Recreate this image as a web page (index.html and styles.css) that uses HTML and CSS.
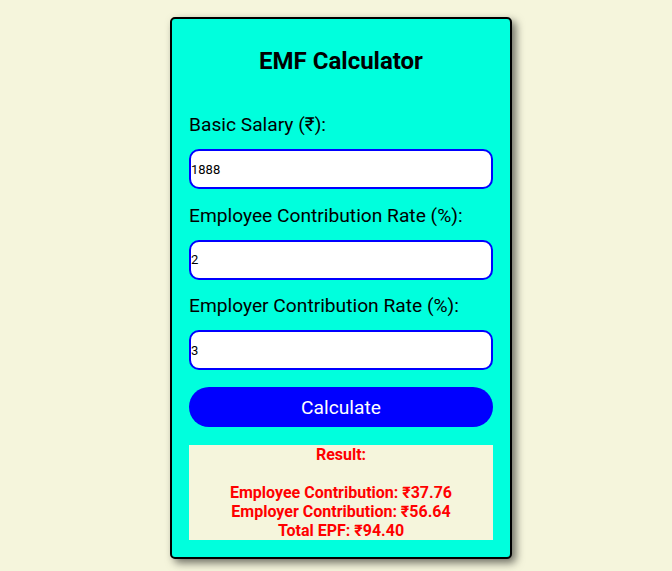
FILE: index.html
```html
<!DOCTYPE html>
<html lang="en">
<head>
<meta charset="utf-8">
<title>EMF Calculator</title>
<link rel="stylesheet" href="styles.css">
</head>
<body>
<div class="card">
  <h2 class="title">EMF Calculator</h2>
  <label class="label" for="salary">Basic Salary (₹):</label>
  <input class="field" id="salary" type="number" value="1888">
  <label class="label" for="emp">Employee Contribution Rate (%):</label>
  <input class="field" id="emp" type="number" value="2">
  <label class="label" for="er">Employer Contribution Rate (%):</label>
  <input class="field" id="er" type="number" value="3">
  <button class="btn" type="button">Calculate</button>
  <div class="result">Result:<br><br>Employee Contribution: ₹37.76<br>Employer Contribution: ₹56.64<br>Total EPF: ₹94.40</div>
</div>
</body>
</html>
```
FILE: styles.css
```css
html, body {
  margin: 0;
  padding: 0;
  background: #f5f5dc;
  font-family: Roboto, "Noto Sans", sans-serif;
}
body {
  display: flex;
  justify-content: center;
  align-items: flex-start;
  padding-left: 10px;
  padding-top: 17px;
  min-height: 571px;
  box-sizing: border-box;
}
.card {
  width: 342px;
  box-sizing: border-box;
  background: #00ffdd;
  border: 2px solid #000;
  border-radius: 5px;
  padding: 16px 17px 17px;
  box-shadow: 4px 4px 8px rgba(0, 0, 0, 0.55);
  display: flex;
  flex-direction: column;
}
.title {
  margin: 12px 0 38px;
  font-size: 24px;
  font-weight: 700;
  text-align: center;
  color: #000;
}
.label {
  display: block;
  font-size: 19.2px;
  color: #000;
  margin-bottom: 13px;
}
.field {
  display: block;
  width: 100%;
  height: 40px;
  box-sizing: border-box;
  border: 2px solid #0000ff;
  border-radius: 10px;
  padding: 0;
  margin: 0 0 14.5px;
  font-family: Roboto, sans-serif;
  font-size: 13px;
  color: #000;
  background: #fff;
  outline: none;
  -moz-appearance: textfield;
}
.field::-webkit-outer-spin-button,
.field::-webkit-inner-spin-button {
  -webkit-appearance: none;
  margin: 0;
}
.btn {
  display: block;
  width: 100%;
  height: 40px;
  margin-top: 2.5px;
  border: none;
  border-radius: 20px;
  background: #0000ff;
  color: #fff;
  font-family: Roboto, sans-serif;
  font-size: 19.2px;
  cursor: pointer;
}
.result {
  margin-top: 18px;
  background: #f5f5dc;
  color: #ff0000;
  font-weight: 700;
  font-size: 16px;
  text-align: center;
}
```
